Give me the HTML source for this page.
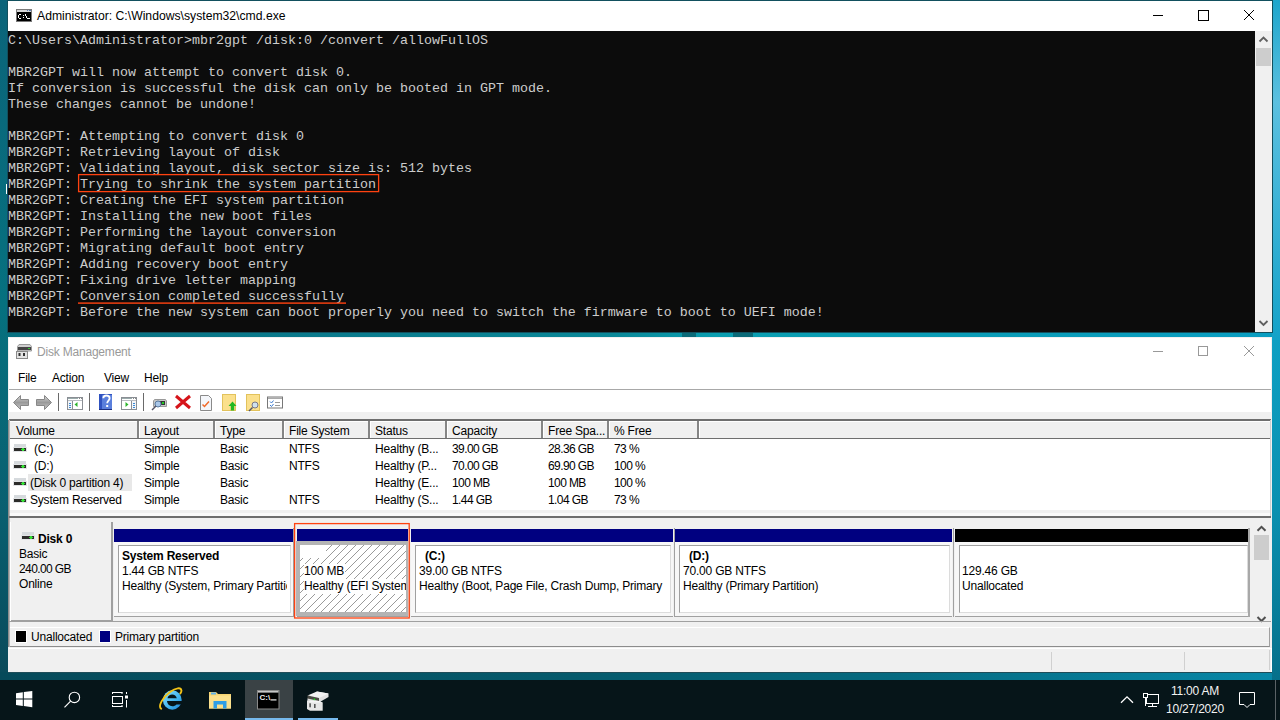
<!DOCTYPE html>
<html><head><meta charset="utf-8">
<style>
*{margin:0;padding:0;box-sizing:border-box}
html,body{width:1280px;height:720px;overflow:hidden}
body{position:relative;font-family:"Liberation Sans",sans-serif;background:#0b6a80}
.a{position:absolute}
#bg{left:0;top:0;width:1280px;height:720px;background:linear-gradient(90deg,#05707f 0%,#05788a 30%,#0594aa 55%,#08a0bc 80%,#10a6c8 100%)}
/* cmd */
#cmd{left:7px;top:0;width:1266px;height:333px;background:#fff;border:1px solid #12505e}
#cmdtitle{left:37px;top:9px;font-size:12.2px;color:#000;white-space:nowrap}
#con{left:8px;top:31px;width:1247px;height:301px;background:#0c0c0c}
#con pre{position:absolute;left:0;top:2px;font-family:"Liberation Mono",monospace;font-size:13.333px;line-height:16px;color:#cccccc;white-space:pre}
#csb{left:1255px;top:31px;width:17px;height:301px;background:#f0f0f0}
/* dm */
#dm{left:8px;top:337px;width:1264px;height:336px;background:#f0f0f0;border-bottom:1px solid #1f4d59}
.t12{font-size:12px;white-space:nowrap;letter-spacing:-0.2px}
.n{letter-spacing:-0.6px}
#taskbar{left:0;top:680px;width:1280px;height:40px;background:#061519}
</style></head><body>
<div id="bg" class="a"></div>
<div class="a" style="left:0;top:331px;width:1280px;height:7px;background:linear-gradient(90deg,#077080 0%,#0a7a8c 25%,#0a8898 48%,#0a9eb0 56%,#0a9cb6 75%,#0a9ec2 100%)"></div>
<div class="a" style="left:682px;top:331px;width:14px;height:7px;background:#0a6a78"></div>
<div class="a" style="left:733px;top:331px;width:20px;height:7px;background:#0a6a78"></div>
<div class="a" style="left:0;top:0;width:8px;height:680px;background:linear-gradient(180deg,#0b647a 0%,#06717f 45%,#0a5f70 75%,#0a4a5a 100%)"></div>
<div class="a" style="left:1272px;top:0;width:8px;height:340px;background:linear-gradient(180deg,#1ea6cc 0%,#5cc0df 30%,#3cb3d6 60%,#14a2c8 100%)"></div>
<div class="a" style="left:1272px;top:340px;width:8px;height:340px;background:linear-gradient(180deg,#0d9fc2 0%,#0a90b0 50%,#06708a 100%)"></div>
<div class="a" style="left:0;top:672px;width:1272px;height:8px;background:linear-gradient(90deg,#064a5a 0%,#055a6c 45%,#056a80 70%,#0888a8 100%)"></div>
<div class="a" style="left:6px;top:184px;width:1px;height:10px;background:#fff"></div>


<!-- CMD WINDOW -->
<div id="cmd" class="a"></div>
<svg class="a" style="left:16px;top:9px" width="16" height="13" viewBox="0 0 16 13" shape-rendering="crispEdges">
<rect x="0" y="0" width="16" height="13" fill="#7a7a7a"/>
<rect x="1" y="1" width="14" height="2" fill="#d4d4d4"/>
<rect x="11" y="1" width="1" height="1" fill="#5a7ab0"/><rect x="12.5" y="1" width="1" height="1" fill="#5a7ab0"/><rect x="14" y="1" width="1" height="1" fill="#5a7ab0"/>
<rect x="1" y="3" width="14" height="9" fill="#000"/>
<rect x="2" y="6" width="1" height="3" fill="#fff"/><rect x="3" y="5" width="2" height="1" fill="#fff"/><rect x="3" y="9" width="2" height="1" fill="#fff"/>
<rect x="7" y="6" width="1" height="1" fill="#fff"/><rect x="7" y="8" width="1" height="1" fill="#fff"/>
<rect x="9" y="5" width="1" height="2" fill="#fff"/><rect x="10" y="7" width="1" height="2" fill="#fff"/><rect x="11" y="9" width="1" height="1" fill="#fff"/>
<rect x="12" y="9" width="2" height="1" fill="#fff"/>
</svg>
<div id="cmdtitle" class="a">Administrator: C:\Windows\system32\cmd.exe</div>
<!-- caption buttons -->
<svg class="a" style="left:1150px;top:8px" width="110" height="16">
<line x1="3" y1="7.5" x2="13" y2="7.5" stroke="#000" stroke-width="1"/>
<rect x="48.5" y="2.5" width="10" height="10" fill="none" stroke="#000"/>
<line x1="94" y1="2" x2="104" y2="12" stroke="#000"/>
<line x1="104" y1="2" x2="94" y2="12" stroke="#000"/>
</svg>
<div id="con" class="a"><pre>C:\Users\Administrator>mbr2gpt /disk:0 /convert /allowFullOS

MBR2GPT will now attempt to convert disk 0.
If conversion is successful the disk can only be booted in GPT mode.
These changes cannot be undone!

MBR2GPT: Attempting to convert disk 0
MBR2GPT: Retrieving layout of disk
MBR2GPT: Validating layout, disk sector size is: 512 bytes
MBR2GPT: Trying to shrink the system partition
MBR2GPT: Creating the EFI system partition
MBR2GPT: Installing the new boot files
MBR2GPT: Performing the layout conversion
MBR2GPT: Migrating default boot entry
MBR2GPT: Adding recovery boot entry
MBR2GPT: Fixing drive letter mapping
MBR2GPT: Conversion completed successfully
MBR2GPT: Before the new system can boot properly you need to switch the firmware to boot to UEFI mode!</pre>
<svg class="a" style="left:0;top:0" width="1247" height="301"><rect x="70.6" y="143.6" width="300" height="17" fill="none" stroke="#ff4210" stroke-width="1.3"/><rect x="70" y="271.4" width="268" height="1.4" fill="#ff4210"/></svg>

</div>
<div id="csb" class="a"></div>
<svg class="a" style="left:1255px;top:31px" width="17" height="301">
<path d="M4.5 10.5 L8.5 6.5 L12.5 10.5" fill="none" stroke="#606060" stroke-width="1.8"/>
<rect x="1" y="17" width="15" height="18" fill="#cdcdcd"/>
<path d="M4.5 290 L8.5 294 L12.5 290" fill="none" stroke="#606060" stroke-width="1.8"/>
</svg>


<!-- DISK MGMT -->
<div id="dm" class="a"></div>
<div class="a" style="left:9px;top:338px;width:1262px;height:52px;background:#fff"></div>
<svg class="a" style="left:16px;top:343px" width="16" height="16" viewBox="0 0 16 16">
<path d="M3 1.5 L14 1.5 L15.5 3.5 L15.5 8 L1.5 8 L1.5 3.5 Z" fill="#cfcfcf" stroke="#9a9a9a"/>
<rect x="2" y="4" width="13" height="3" fill="#444"/>
<rect x="12" y="5" width="2" height="1" fill="#3c3"/>
<rect x="0.5" y="8.5" width="11" height="7" fill="#e4e4e4" stroke="#8a8a8a"/>
<rect x="2.5" y="10" width="2" height="3" fill="#333"/><rect x="7" y="10" width="2" height="3" fill="#333"/>
</svg>
<div class="a t12" style="left:37px;top:345px;color:#999">Disk Management</div>
<svg class="a" style="left:1150px;top:343px" width="110" height="16">
<line x1="3" y1="8.5" x2="13" y2="8.5" stroke="#999"/>
<rect x="48.5" y="3.5" width="9" height="9" fill="none" stroke="#999"/>
<line x1="94" y1="3" x2="104" y2="13" stroke="#999"/>
<line x1="104" y1="3" x2="94" y2="13" stroke="#999"/>
</svg>
<div class="a t12" style="left:18px;top:371px">File</div>
<div class="a t12" style="left:52px;top:371px">Action</div>
<div class="a t12" style="left:104px;top:371px">View</div>
<div class="a t12" style="left:144px;top:371px">Help</div>
<div class="a" style="left:9px;top:389px;width:1262px;height:1px;background:#a8a8a8"></div>
<div class="a" style="left:9px;top:390px;width:1262px;height:22px;background:#fff"></div>
<!-- toolbar icons -->
<svg class="a" style="left:9px;top:390px" width="290" height="22" viewBox="0 0 290 22">
<defs>
<linearGradient id="ag" x1="0" y1="0" x2="0" y2="1"><stop offset="0" stop-color="#d8d8d8"/><stop offset=".5" stop-color="#9a9a9a"/><stop offset="1" stop-color="#c8c8c8"/></linearGradient>
</defs>
<path d="M4.5 12.5 L11.5 5.5 L11.5 9.5 L19.5 9.5 L19.5 15.5 L11.5 15.5 L11.5 19.5 Z" fill="url(#ag)" stroke="#888"/>
<path d="M42.5 12.5 L35.5 5.5 L35.5 9.5 L27.5 9.5 L27.5 15.5 L35.5 15.5 L35.5 19.5 Z" fill="url(#ag)" stroke="#888"/>
<rect x="49" y="3" width="1" height="18" fill="#6a6a6a"/>
<g shape-rendering="crispEdges">
<rect x="58" y="7" width="16" height="13" fill="#8a8e94"/>
<rect x="59" y="8" width="14" height="11" fill="#fff"/>
<rect x="59" y="8" width="10" height="1" fill="#9aa"/><rect x="70" y="8" width="1" height="1" fill="#888"/><rect x="72" y="8" width="1" height="1" fill="#888"/>
<rect x="59" y="10" width="14" height="1" fill="#b8bcc2"/>
<rect x="59" y="11" width="4" height="8" fill="#f4f6f8"/><rect x="63" y="11" width="1" height="8" fill="#8a8e94"/>
<rect x="60" y="12.5" width="2" height="1" fill="#3a8ad8"/><rect x="60" y="14.5" width="2" height="1" fill="#3a8ad8"/><rect x="60" y="16.5" width="2" height="1" fill="#3a8ad8"/>
</g>
<path d="M65.5 14.5 L68.5 12 L68.5 17 Z" fill="#2cb52c"/>
<rect x="80" y="3" width="1" height="18" fill="#6a6a6a"/>
<rect x="90" y="4" width="13" height="16" fill="#2f52c0"/>
<rect x="93" y="5" width="10" height="14" fill="#5a7fdc"/>
<rect x="90" y="19" width="13" height="1" fill="#1c2f80"/>
<path d="M94.3 8.3 C94.3 6.3 96 5.5 97.4 5.5 C99.2 5.5 100.6 6.6 100.6 8.3 C100.6 10.4 98.2 10.8 98.2 13.3" fill="none" stroke="#fff" stroke-width="1.8"/>
<rect x="97.2" y="15" width="2" height="2" fill="#fff"/>
<g shape-rendering="crispEdges">
<rect x="112" y="7" width="16" height="13" fill="#8a8e94"/>
<rect x="113" y="8" width="14" height="11" fill="#fff"/>
<rect x="113" y="8" width="10" height="1" fill="#9aa"/><rect x="124" y="8" width="1" height="1" fill="#888"/><rect x="126" y="8" width="1" height="1" fill="#888"/>
<rect x="113" y="10" width="14" height="1" fill="#b8bcc2"/>
<rect x="123" y="11" width="4" height="8" fill="#f4f6f8"/><rect x="122" y="11" width="1" height="8" fill="#8a8e94"/>
<rect x="124" y="12.5" width="2" height="1" fill="#3a8ad8"/><rect x="124" y="14.5" width="2" height="1" fill="#3a8ad8"/><rect x="124" y="16.5" width="2" height="1" fill="#3a8ad8"/>
</g>
<path d="M119.5 14.5 L116.5 12 L116.5 17 Z" fill="#2cb52c"/>
<rect x="134" y="3" width="1" height="18" fill="#6a6a6a"/>
<path d="M145.5 9.5 L156.5 9.5 L157.5 11 L157.5 16.5 L144.5 16.5 L144.5 11 Z" fill="#c8c8c8" stroke="#999"/>
<rect x="151" y="11" width="5" height="4" fill="#333"/><rect x="153" y="12" width="2" height="2" fill="#2c2"/>
<circle cx="149" cy="14" r="3" fill="#a9c6e8" stroke="#5a7aa0"/>
<line x1="147" y1="16" x2="143" y2="20" stroke="#556" stroke-width="1.5"/>
<path d="M167 6 L181 18 M181 6 L167 18" stroke="#d6141a" stroke-width="3"/>
<path d="M191.5 5.5 L199.5 5.5 L202.5 8.5 L202.5 20.5 L191.5 20.5 Z" fill="#f4f6fa" stroke="#8a8a8a"/>
<path d="M193.5 14.5 L195.5 16.5 L200 11.5" fill="none" stroke="#f06a2a" stroke-width="1.5"/>
<rect x="213.5" y="4.5" width="13" height="16" fill="#fbe08c" stroke="#e2c25c"/>
<path d="M221.8 20.5 L221.8 16 L219.5 16 L223.5 11.5 L227.5 16 L225.2 16 L225.2 20.5 Z" fill="#22b822"/>
<rect x="237.5" y="4.5" width="13" height="16" fill="#fbe08c" stroke="#e2c25c"/>
<circle cx="246" cy="15" r="3" fill="#cfe0ee" stroke="#778"/>
<line x1="243.5" y1="17.5" x2="240" y2="21" stroke="#556" stroke-width="1.5"/>
<rect x="258.5" y="7" width="15" height="11" fill="#fff" stroke="#777"/>
<rect x="259" y="7.5" width="14" height="1.5" fill="#aaa"/>
<path d="M261 11.5 L262.5 13 L264.5 10.5 M261 15 L262.5 16.5 L264.5 14" fill="none" stroke="#3a7ad0"/>
<rect x="266" y="12" width="5" height="1" fill="#999"/><rect x="266" y="15" width="5" height="1" fill="#999"/>
</svg>
<!-- list view -->
<div class="a" style="left:9px;top:419px;width:1262px;height:2px;background:#6e6e6e"></div>
<div class="a" style="left:8px;top:420px;width:1px;height:227px;background:#8c8c8c"></div><div class="a" style="left:9px;top:420px;width:1px;height:227px;background:#b4b4b4"></div>
<div class="a" style="left:10px;top:421px;width:1261px;height:19px;background:#f0f0f0;border-top:1px solid #fff;border-bottom:2px solid #6e6e6e"></div>
<div class="a" style="left:10px;top:439px;width:1260px;height:72px;background:#fff"></div>
<div class="a" style="left:10px;top:510px;width:1260px;height:3px;background:#f0f0f0"></div>
<div class="a" style="left:10px;top:513px;width:1261px;height:3px;background:#fafafa"></div>
<div class="a" style="left:9px;top:516px;width:1262px;height:2px;background:#6e6e6e"></div>
<div class="a" style="left:1270px;top:420px;width:1px;height:96px;background:#d0d0d0"></div>
<div class="a t12" style="left:16px;top:424px">Volume</div>
<div class="a" style="left:137px;top:421px;width:2px;height:17px;background:#858585"></div>
<div class="a" style="left:139px;top:421px;width:1px;height:17px;background:#fff"></div>
<div class="a t12" style="left:144px;top:424px">Layout</div>
<div class="a" style="left:213px;top:421px;width:2px;height:17px;background:#858585"></div>
<div class="a" style="left:215px;top:421px;width:1px;height:17px;background:#fff"></div>
<div class="a t12" style="left:220px;top:424px">Type</div>
<div class="a" style="left:282px;top:421px;width:2px;height:17px;background:#858585"></div>
<div class="a" style="left:284px;top:421px;width:1px;height:17px;background:#fff"></div>
<div class="a t12" style="left:289px;top:424px">File System</div>
<div class="a" style="left:368px;top:421px;width:2px;height:17px;background:#858585"></div>
<div class="a" style="left:370px;top:421px;width:1px;height:17px;background:#fff"></div>
<div class="a t12" style="left:375px;top:424px">Status</div>
<div class="a" style="left:445px;top:421px;width:2px;height:17px;background:#858585"></div>
<div class="a" style="left:447px;top:421px;width:1px;height:17px;background:#fff"></div>
<div class="a t12" style="left:452px;top:424px">Capacity</div>
<div class="a" style="left:541px;top:421px;width:2px;height:17px;background:#858585"></div>
<div class="a" style="left:543px;top:421px;width:1px;height:17px;background:#fff"></div>
<div class="a t12" style="left:548px;top:424px">Free Spa...</div>
<div class="a" style="left:607px;top:421px;width:2px;height:17px;background:#858585"></div>
<div class="a" style="left:609px;top:421px;width:1px;height:17px;background:#fff"></div>
<div class="a t12" style="left:614px;top:424px">% Free</div>
<div class="a" style="left:697px;top:421px;width:2px;height:17px;background:#858585"></div>
<div class="a" style="left:699px;top:421px;width:1px;height:17px;background:#fff"></div>
<svg class="a" style="left:13px;top:444px" width="14" height="9" shape-rendering="crispEdges"><rect x="1" y="0" width="12" height="4" fill="#d6dadd"/><rect x="0" y="3" width="14" height="5" fill="#e2e4e6"/><rect x="1" y="4" width="12" height="3" fill="#2c2c2a"/><rect x="9" y="4" width="2" height="3" fill="#33dd33"/><rect x="8" y="5" width="4" height="1" fill="#33dd33"/></svg>
<div class="a t12" style="left:34px;top:442px">(C:)</div>
<div class="a t12" style="left:144px;top:442px">Simple</div>
<div class="a t12" style="left:220px;top:442px">Basic</div>
<div class="a t12" style="left:289px;top:442px">NTFS</div>
<div class="a t12" style="left:375px;top:442px">Healthy (B...</div>
<div class="a t12 n" style="left:452px;top:442px">39.00 GB</div>
<div class="a t12 n" style="left:548px;top:442px">28.36 GB</div>
<div class="a t12 n" style="left:614px;top:442px">73 %</div>
<svg class="a" style="left:13px;top:461px" width="14" height="9" shape-rendering="crispEdges"><rect x="1" y="0" width="12" height="4" fill="#d6dadd"/><rect x="0" y="3" width="14" height="5" fill="#e2e4e6"/><rect x="1" y="4" width="12" height="3" fill="#2c2c2a"/><rect x="9" y="4" width="2" height="3" fill="#33dd33"/><rect x="8" y="5" width="4" height="1" fill="#33dd33"/></svg>
<div class="a t12" style="left:34px;top:459px">(D:)</div>
<div class="a t12" style="left:144px;top:459px">Simple</div>
<div class="a t12" style="left:220px;top:459px">Basic</div>
<div class="a t12" style="left:289px;top:459px">NTFS</div>
<div class="a t12" style="left:375px;top:459px">Healthy (P...</div>
<div class="a t12 n" style="left:452px;top:459px">70.00 GB</div>
<div class="a t12 n" style="left:548px;top:459px">69.90 GB</div>
<div class="a t12 n" style="left:614px;top:459px">100 %</div>
<svg class="a" style="left:13px;top:478px" width="14" height="9" shape-rendering="crispEdges"><rect x="1" y="0" width="12" height="4" fill="#d6dadd"/><rect x="0" y="3" width="14" height="5" fill="#e2e4e6"/><rect x="1" y="4" width="12" height="3" fill="#2c2c2a"/><rect x="9" y="4" width="2" height="3" fill="#33dd33"/><rect x="8" y="5" width="4" height="1" fill="#33dd33"/></svg>
<div class="a" style="left:28px;top:474px;width:104px;height:17px;background:#e8e8e8"></div>
<div class="a t12" style="left:30px;top:476px">(Disk 0 partition 4)</div>
<div class="a t12" style="left:144px;top:476px">Simple</div>
<div class="a t12" style="left:220px;top:476px">Basic</div>
<div class="a t12" style="left:375px;top:476px">Healthy (E...</div>
<div class="a t12 n" style="left:452px;top:476px">100 MB</div>
<div class="a t12 n" style="left:548px;top:476px">100 MB</div>
<div class="a t12 n" style="left:614px;top:476px">100 %</div>
<svg class="a" style="left:13px;top:495px" width="14" height="9" shape-rendering="crispEdges"><rect x="1" y="0" width="12" height="4" fill="#d6dadd"/><rect x="0" y="3" width="14" height="5" fill="#e2e4e6"/><rect x="1" y="4" width="12" height="3" fill="#2c2c2a"/><rect x="9" y="4" width="2" height="3" fill="#33dd33"/><rect x="8" y="5" width="4" height="1" fill="#33dd33"/></svg>
<div class="a t12" style="left:30px;top:493px">System Reserved</div>
<div class="a t12" style="left:144px;top:493px">Simple</div>
<div class="a t12" style="left:220px;top:493px">Basic</div>
<div class="a t12" style="left:289px;top:493px">NTFS</div>
<div class="a t12" style="left:375px;top:493px">Healthy (S...</div>
<div class="a t12 n" style="left:452px;top:493px">1.44 GB</div>
<div class="a t12 n" style="left:548px;top:493px">1.04 GB</div>
<div class="a t12 n" style="left:614px;top:493px">73 %</div>

<!-- graphical view -->
<div class="a" style="left:10px;top:522px;width:103px;height:99px;background:#f0f0f0;border-right:2px solid #a0a0a0;border-bottom:1px solid #a0a0a0"></div>
<div class="a" style="left:10px;top:522px;width:1px;height:99px;background:#fff"></div>
<svg class="a" style="left:21px;top:532px" width="14" height="9" shape-rendering="crispEdges"><rect x="1" y="0" width="12" height="4" fill="#d6dadd"/><rect x="0" y="3" width="14" height="5" fill="#e2e4e6"/><rect x="1" y="4" width="12" height="3" fill="#2c2c2a"/><rect x="9" y="4" width="2" height="3" fill="#33dd33"/><rect x="8" y="5" width="4" height="1" fill="#33dd33"/></svg>
<div class="a t12" style="left:38px;top:532px;font-weight:bold">Disk 0</div>
<div class="a t12" style="left:19px;top:547px">Basic</div>
<div class="a t12 n" style="left:19px;top:562px">240.00 GB</div>
<div class="a t12" style="left:19px;top:577px">Online</div>
<div class="a" style="left:114px;top:529px;width:179px;height:13px;background:navy"></div>
<div class="a" style="left:114px;top:542px;width:179px;height:75px;background:#f7f7f7;border-bottom:1px solid #a0a0a0"></div>
<div class="a" style="left:118px;top:545px;width:173px;height:68px;background:#fff;border-left:1px solid #a0a0a0;border-top:1px solid #a0a0a0;border-right:1px solid #dcdcdc;border-bottom:1px solid #dcdcdc"></div>
<div class="a t12" style="left:122px;top:549px;font-weight:bold">System Reserved</div>
<div class="a" style="left:122px;top:564px;width:165px;height:32px;overflow:hidden"><div class="t12" style="line-height:15px">1.44 GB NTFS<br>Healthy (System, Primary Partition)</div></div>
<div class="a" style="left:297px;top:529px;width:111px;height:13px;background:navy"></div>
<div class="a" style="left:297px;top:542px;width:111px;height:75px;background:#f7f7f7;border-bottom:1px solid #a0a0a0"></div>
<div class="a" style="left:296px;top:541px;width:112px;height:75px;border:4px solid #b4b4b4;border-right-width:2px;border-bottom-width:4px;background:#fff"></div>
<svg class="a" style="left:300px;top:545px" width="106" height="67"><defs><pattern id="hp" width="8" height="8" patternUnits="userSpaceOnUse" x="0" y="0"><path d="M0 8 L8 0" stroke="#9a9a9a" stroke-width="1" shape-rendering="crispEdges"/></pattern></defs><rect width="106" height="67" fill="url(#hp)"/><rect x="0" y="0" width="26" height="13" fill="#fff"/></svg>
<div class="a" style="left:304px;top:564px;width:102px;height:32px;overflow:hidden"><div class="t12" style="line-height:15px"><span style="background:#fff;display:inline-block;height:15px;padding-right:1px">100 MB</span><br><span style="background:#fff;display:inline-block;height:15px">Healthy (EFI System Partition)</span></div></div>
<div class="a" style="left:411px;top:529px;width:262px;height:13px;background:navy"></div>
<div class="a" style="left:411px;top:542px;width:262px;height:75px;background:#f7f7f7;border-bottom:1px solid #a0a0a0"></div>
<div class="a" style="left:415px;top:545px;width:256px;height:68px;background:#fff;border-left:1px solid #a0a0a0;border-top:1px solid #a0a0a0;border-right:1px solid #dcdcdc;border-bottom:1px solid #dcdcdc"></div>
<div class="a t12" style="left:425px;top:549px;font-weight:bold">(C:)</div>
<div class="a" style="left:419px;top:564px;width:248px;height:32px;overflow:hidden"><div class="t12" style="line-height:15px">39.00 GB NTFS<br>Healthy (Boot, Page File, Crash Dump, Primary</div></div>
<div class="a" style="left:675px;top:529px;width:277px;height:13px;background:navy"></div>
<div class="a" style="left:675px;top:542px;width:277px;height:75px;background:#f7f7f7;border-bottom:1px solid #a0a0a0"></div>
<div class="a" style="left:679px;top:545px;width:271px;height:68px;background:#fff;border-left:1px solid #a0a0a0;border-top:1px solid #a0a0a0;border-right:1px solid #dcdcdc;border-bottom:1px solid #dcdcdc"></div>
<div class="a t12" style="left:689px;top:549px;font-weight:bold">(D:)</div>
<div class="a" style="left:683px;top:564px;width:263px;height:32px;overflow:hidden"><div class="t12" style="line-height:15px">70.00 GB NTFS<br>Healthy (Primary Partition)</div></div>
<div class="a" style="left:955px;top:529px;width:293px;height:13px;background:#000"></div>
<div class="a" style="left:955px;top:542px;width:295px;height:75px;background:#f7f7f7;border-bottom:1px solid #a0a0a0"></div>
<div class="a" style="left:959px;top:545px;width:289px;height:68px;background:#fff;border-left:1px solid #a0a0a0;border-top:1px solid #a0a0a0;border-right:1px solid #dcdcdc;border-bottom:1px solid #dcdcdc"></div>
<div class="a" style="left:962px;top:564px;width:281px;height:32px;overflow:hidden"><div class="t12" style="line-height:15px">129.46 GB<br>Unallocated</div></div>
<div class="a" style="left:293px;top:528px;width:1px;height:89px;background:#a0a0a0"></div>
<div class="a" style="left:409px;top:528px;width:1px;height:89px;background:#a0a0a0"></div>
<div class="a" style="left:674px;top:528px;width:1px;height:89px;background:#a0a0a0"></div>
<div class="a" style="left:953px;top:528px;width:1px;height:89px;background:#a0a0a0"></div>

<svg class="a" style="left:290px;top:520px" width="125" height="105"><rect x="4.6" y="3.6" width="114.6" height="94.4" fill="none" stroke="#ff4210" stroke-width="1.3"/></svg>
<!-- graph scrollbar -->
<div class="a" style="left:1253px;top:522px;width:17px;height:100px;background:#f0f0f0"></div>
<svg class="a" style="left:1253px;top:522px" width="17" height="102">
<path d="M4.5 8.8 L8.5 4.8 L12.5 8.8" fill="none" stroke="#505050" stroke-width="2"/>
<rect x="1" y="13" width="15" height="25" fill="#cdcdcd"/>
<path d="M4.5 95 L8.5 99 L12.5 95" fill="none" stroke="#505050" stroke-width="2"/>
</svg>
<div class="a" style="left:1248px;top:528px;width:2px;height:89px;background:#a8a8a8"></div>
<div class="a" style="left:9px;top:621px;width:1262px;height:1px;background:#a0a0a0"></div>
<!-- legend -->
<div class="a" style="left:10px;top:627px;width:1260px;height:20px;background:#f0f0f0;border-top:1px solid #fff;border-right:1px solid #a0a0a0;border-bottom:1px solid #8c8c8c"></div>
<div class="a" style="left:15px;top:630px;width:12px;height:13px;background:#000;border:1px solid #fff"></div>
<div class="a t12" style="left:31px;top:630px">Unallocated</div>
<div class="a" style="left:99px;top:630px;width:12px;height:13px;background:#000080;border:1px solid #fff"></div>
<div class="a t12" style="left:115px;top:630px">Primary partition</div>
<!-- status bar -->
<div class="a" style="left:9px;top:648px;width:1263px;height:1px;background:#fff"></div><div class="a" style="left:1271px;top:648px;width:1px;height:24px;background:#fff"></div><div class="a" style="left:1269px;top:650px;width:1px;height:20px;background:#d0d0d0"></div>
<div class="a" style="left:1051px;top:652px;width:1px;height:18px;background:#d0d0d0"></div>
<div class="a" style="left:1184px;top:652px;width:1px;height:18px;background:#d0d0d0"></div>
<div id="taskbar" class="a"></div>
<svg class="a" style="left:0;top:680px" width="1280" height="40" viewBox="0 0 1280 40">
<!-- windows logo -->
<path d="M16 13.2 L22.8 12.3 L22.8 18.6 L16 18.6 Z M23.8 12.1 L32.3 11 L32.3 18.6 L23.8 18.6 Z M16 19.6 L22.8 19.6 L22.8 26 L16 25.1 Z M23.8 19.6 L32.3 19.6 L32.3 27.2 L23.8 26.1 Z" fill="#fff"/>
<!-- search -->
<circle cx="74.4" cy="17.4" r="5.2" fill="none" stroke="#fff" stroke-width="1.1"/>
<line x1="70.6" y1="21.2" x2="64.5" y2="27.3" stroke="#fff" stroke-width="1.2"/>
<!-- task view -->
<path d="M112 12.5 L122.5 12.5 M112 26.5 L122.5 26.5" stroke="#fff" stroke-width="1"/>
<path d="M112.5 12 L112.5 14 M122 12 L122 14 M112.5 25 L112.5 27 M122 25 L122 27" stroke="#fff" stroke-width="1"/>
<rect x="112.5" y="16.5" width="10" height="7" fill="none" stroke="#fff"/>
<path d="M126.5 12 L126.5 14 M126.5 20 L126.5 27.5" stroke="#fff"/>
<rect x="125" y="15.5" width="3" height="3" fill="#fff"/>
<!-- IE -->
<defs><linearGradient id="ieg" x1="0" y1="0" x2="1" y2="1"><stop offset="0" stop-color="#8fe0fb"/><stop offset=".6" stop-color="#3fb4ee"/><stop offset="1" stop-color="#1f7fd6"/></linearGradient></defs>
<ellipse cx="172.3" cy="20" rx="9.4" ry="9.7" fill="url(#ieg)"/>
<path d="M167.5 18.3 C168 15.5 170 14.4 172.2 14.4 C174.4 14.4 176.3 15.6 176.8 18.3 Z" fill="#061519"/>
<path d="M167 21 L182 21 L182 24.4 L176.5 24.4 C175.5 25.6 174 26.2 172.3 26.2 C169.5 26.2 167.3 24 167 21 Z" fill="#061519"/>
<path d="M161.2 28.8 C157.5 26.5 163 17 170 12 C176 7.5 181 7.2 181.4 10.5 C181.6 11.6 181 12.6 180.4 13.4" fill="none" stroke="#f3c318" stroke-width="1.9" stroke-linecap="round"/>
<!-- folder -->
<path d="M209 12 L216 12 L218 14 L231 14 L231 28.5 L209 28.5 Z" fill="#f6d472"/>
<path d="M209 15.5 L231 15.5 L231 28.5 L209 28.5 Z" fill="#fbe08c"/>
<rect x="211" y="12.5" width="5" height="2" fill="#5fb0e8"/>
<path d="M213.5 28.5 L213.5 21 L226.5 21 L226.5 28.5 L223 28.5 L223 24.5 L217 24.5 L217 28.5 Z" fill="#2f9ee6"/>
<!-- active cmd -->
<rect x="245" y="0" width="48" height="40" fill="#3a4245"/>
<rect x="245" y="38" width="48" height="2" fill="#76b9ed"/>
<rect x="257.5" y="10.5" width="21.5" height="18.5" fill="#000" stroke="#8a8a8a"/>
<rect x="258" y="11" width="20.5" height="1.6" fill="#c8c8c8"/>
<text x="259.5" y="20.3" font-family="Liberation Sans" font-weight="bold" font-size="8" fill="#eee">C:\</text>
<rect x="270.5" y="19.3" width="6" height="1.2" fill="#eee"/>
<!-- disk mgmt -->
<rect x="298" y="38" width="40" height="2" fill="#76b9ed"/>
<path d="M307.5 18.5 L317 11.5 L328.5 13.5 L328.5 17 L319 22.5 L307.5 20.5 Z" fill="#e0e0e0"/>
<path d="M307.5 15.5 L317 11.5 L328.5 13.5 L319 18 Z" fill="#f2f2f2"/>
<path d="M307.5 15.5 L319 18 L319 21 L307.5 18.5 Z" fill="#4a4a44"/>
<circle cx="314.4" cy="19.4" r="0.9" fill="#22dd22"/>
<path d="M307 20.5 L319 21 L322.7 22.5 L322.7 30.7 L310 30.7 L307 29 Z" fill="#e6e6e6"/>
<path d="M307 20.5 L319 21 L322.7 22.5 L311 22.5 Z" fill="#f5f5f5"/>
<rect x="309.3" y="23.3" width="1.6" height="4" fill="#555"/><rect x="314" y="24" width="1.6" height="4" fill="#555"/>
<!-- tray -->
<path d="M1121 22.8 L1127 16.8 L1133 22.8" fill="none" stroke="#fff" stroke-width="1.3"/>
<rect x="1146.5" y="14.5" width="12" height="9" fill="none" stroke="#fff"/>
<path d="M1152.5 24 L1152.5 26.5 M1148 26.5 L1157 26.5" stroke="#fff"/>
<rect x="1143.5" y="13.5" width="4" height="4" fill="#061519" stroke="#fff"/>
<path d="M1145.5 18 L1145.5 26" stroke="#fff"/>
<path d="M1239.5 12.5 L1254.5 12.5 L1254.5 24.5 L1250 24.5 L1247 27.5 L1244 24.5 L1239.5 24.5 Z" fill="none" stroke="#fff"/>
<rect x="1275" y="0" width="1" height="40" fill="#5a6266"/>
</svg>
<div class="a" style="left:1150px;top:682px;width:90px;text-align:center;color:#f2f2f2;font-size:12px;line-height:18px;letter-spacing:-0.2px">11:00 AM<br>10/27/2020</div>
</body></html>
